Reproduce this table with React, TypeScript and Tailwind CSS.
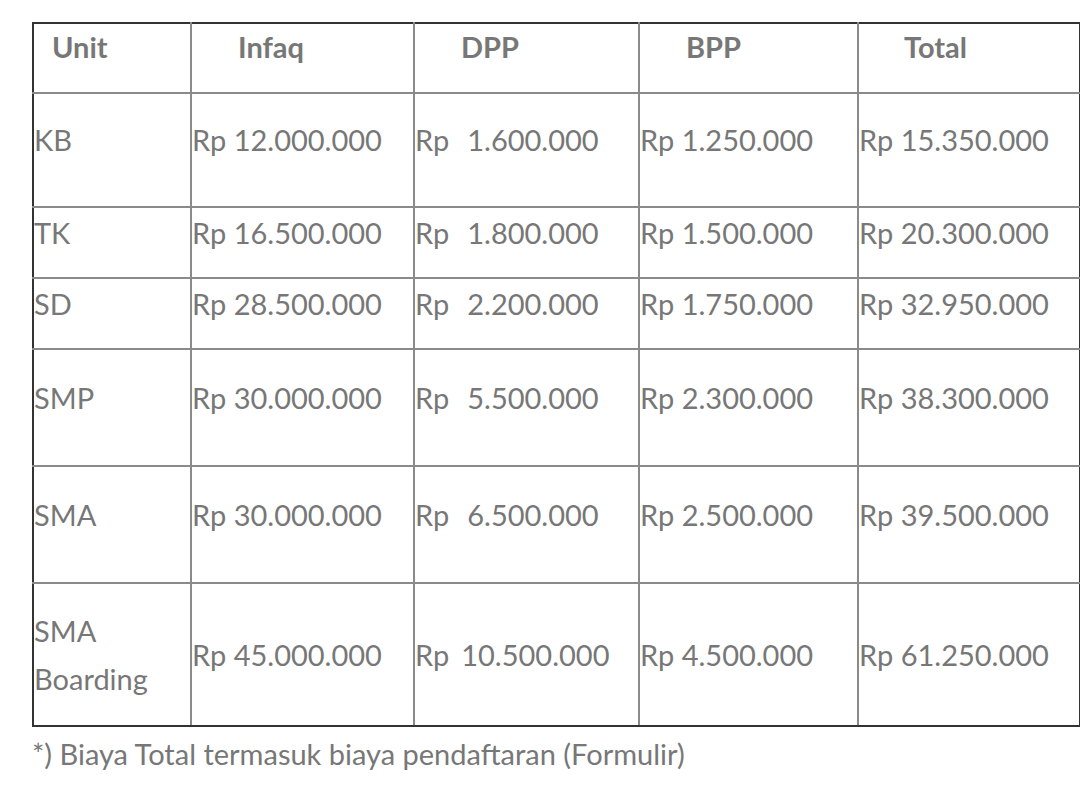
import React from "react";

const rows: { unit: React.ReactNode; infaq: string; dpp: string; wide: boolean; bpp: string; total: string; h: string; pad: string }[] = [
  { unit: "KB", infaq: "12.000.000", dpp: "1.600.000", wide: true, bpp: "1.250.000", total: "15.350.000", h: "h-[114px]", pad: "pb-5 leading-[36px]" },
  { unit: "TK", infaq: "16.500.000", dpp: "1.800.000", wide: true, bpp: "1.500.000", total: "20.300.000", h: "h-[71px]", pad: "pb-5 leading-[36px]" },
  { unit: "SD", infaq: "28.500.000", dpp: "2.200.000", wide: true, bpp: "1.750.000", total: "32.950.000", h: "h-[71px]", pad: "pb-5 leading-[36px]" },
  { unit: "SMP", infaq: "30.000.000", dpp: "5.500.000", wide: true, bpp: "2.300.000", total: "38.300.000", h: "h-[117px]", pad: "pb-5 leading-[36px]" },
  { unit: "SMA", infaq: "30.000.000", dpp: "6.500.000", wide: true, bpp: "2.500.000", total: "39.500.000", h: "h-[117px]", pad: "pb-5 leading-[36px]" },
  { unit: <>SMA<br />Boarding</>, infaq: "45.000.000", dpp: "10.500.000", wide: false, bpp: "4.500.000", total: "61.250.000", h: "h-[143px]", pad: "pb-0 leading-[48px]" },
];

export default function App() {
  const td = "border-2 border-[#8a8a8a] p-0 align-middle whitespace-nowrap";
  const th = "border-2 border-[#8a8a8a] align-middle text-left font-bold pt-0 pb-[22px] leading-[36px]";
  return (
    <div className="bg-white min-h-[804px] w-[1080px] overflow-hidden pt-[22px] pl-8 text-[#777777] font-['Lato',sans-serif] text-[29px] leading-[48px]">
      <table className="table-fixed border-collapse w-[1047px] border-2 border-[#333333]">
        <colgroup>
          <col className="w-[158px]" />
          <col className="w-[223px]" />
          <col className="w-[225px]" />
          <col className="w-[219px]" />
          <col className="w-[222px]" />
        </colgroup>
        <thead>
          <tr className="h-[70px]">
            <th className={`${th} pl-[18px] border-l-[#333333] border-t-[#333333]`}>Unit</th>
            <th className={`${th} pl-[46px] border-t-[#333333]`}>Infaq</th>
            <th className={`${th} pl-[46px] border-t-[#333333]`}>DPP</th>
            <th className={`${th} pl-[46px] border-t-[#333333]`}>BPP</th>
            <th className={`${th} pl-[45px] border-t-[#333333] border-r-[#333333]`}>Total</th>
          </tr>
        </thead>
        <tbody>
          {rows.map((r, i) => {
            const last = i === rows.length - 1;
            const b = last ? "border-b-[#333333]" : "";
            return (
              <tr key={i} className={r.h}>
                <td className={`${td} ${r.pad} ${b} border-l-[#333333] whitespace-normal`}>{r.unit}</td>
                <td className={`${td} ${r.pad} ${b}`}>Rp {r.infaq}</td>
                <td className={`${td} ${r.pad} ${b}`}>
                  Rp<span className={r.wide ? "ml-[18px]" : "ml-[12px]"}>{r.dpp}</span>
                </td>
                <td className={`${td} ${r.pad} ${b}`}>Rp {r.bpp}</td>
                <td className={`${td} ${r.pad} ${b} border-r-[#333333]`}>Rp {r.total}</td>
              </tr>
            );
          })}
        </tbody>
      </table>
      <p className="mt-[3px]">*) Biaya Total termasuk biaya pendaftaran (Formulir)</p>
    </div>
  );
}
